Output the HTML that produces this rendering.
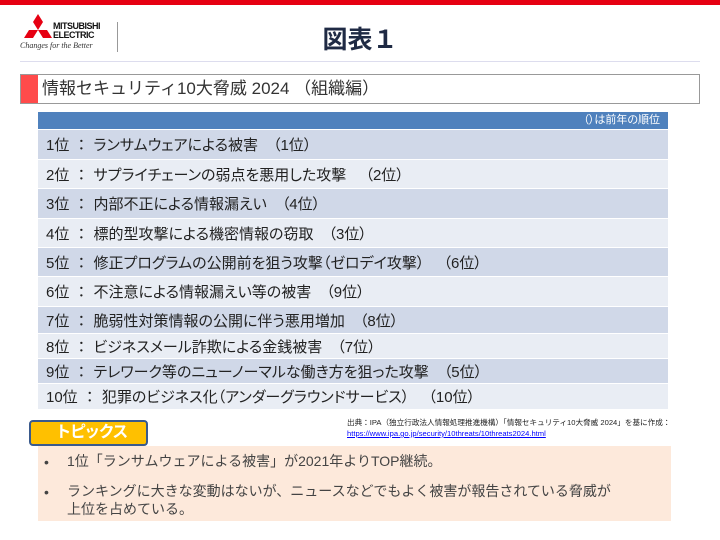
<!DOCTYPE html>
<html><head><meta charset="utf-8"><style>
*{margin:0;padding:0;box-sizing:border-box}
body{width:720px;height:540px;background:#fff;position:relative;overflow:hidden;font-family:"Liberation Sans","Noto Sans CJK JP",sans-serif;color:#222}
.abs{position:absolute}
.row{position:absolute;left:38px;width:630px;font-size:15px;color:#222;padding-left:8px;display:flex;align-items:center;white-space:pre;font-feature-settings:"palt"}
.d{background:#d0d8e8}.l{background:#e9edf4}
</style></head><body>
<div class="abs" style="left:0;top:0;width:720px;height:5px;background:#e60012"></div>
<svg class="abs" style="left:20px;top:14px" width="36" height="32" viewBox="0 0 36 32">
<polygon points="18,0 23,8 18,16 13,8" fill="#e60012"/>
<polygon points="18,16 9,16 4,24 13,24" fill="#e60012"/>
<polygon points="18,16 27,16 32,24 23,24" fill="#e60012"/>
</svg>
<div class="abs" style="left:53px;top:22px;font-size:9px;font-weight:bold;line-height:9px;letter-spacing:-0.5px;color:#111">MITSUBISHI<br>ELECTRIC</div>
<div class="abs" style="left:20px;top:41px;font-size:8px;font-style:italic;font-family:'Liberation Serif',serif;color:#333">Changes for the Better</div>
<div class="abs" style="left:117px;top:22px;width:1px;height:30px;background:#999"></div>
<div class="abs" style="left:0;top:26px;width:720px;text-align:center;font-size:25px;font-weight:bold;color:#1f2a44;line-height:28px">図表１</div>
<div class="abs" style="left:20px;top:61px;width:680px;height:1px;background:#dde"></div>
<div class="abs" style="left:20px;top:74px;width:680px;height:30px;border:1px solid #999"></div>
<div class="abs" style="left:21px;top:75px;width:17px;height:28px;background:#ff4b4b"></div>
<div class="abs" style="left:42px;top:77px;font-size:17px;color:#333;line-height:24px">情報セキュリティ10大脅威 2024 （組織編）</div>
<div class="abs" style="left:38px;top:112px;width:630px;height:17px;background:#4f81bd;color:#fff;font-size:11px;text-align:right;padding-right:8px;line-height:17px;font-feature-settings:'palt'">（）は前年の順位</div>
<div class="row d" style="top:130px;height:29px">1位  ：  ランサムウェアによる被害　（1位）</div>
<div class="row l" style="top:160px;height:28px">2位  ：  サプライチェーンの弱点を悪用した攻撃　 （2位）</div>
<div class="row d" style="top:189px;height:29px">3位  ：  内部不正による情報漏えい　（4位）</div>
<div class="row l" style="top:219px;height:28px">4位  ：  標的型攻撃による機密情報の窃取　（3位）</div>
<div class="row d" style="top:248px;height:28px">5位  ：  修正プログラムの公開前を狙う攻撃（ゼロデイ攻撃）　 （6位）</div>
<div class="row l" style="top:277px;height:29px">6位  ：  不注意による情報漏えい等の被害　（9位）</div>
<div class="row d" style="top:307px;height:26px">7位  ：  脆弱性対策情報の公開に伴う悪用増加　（8位）</div>
<div class="row l" style="top:334px;height:24px">8位  ：  ビジネスメール詐欺による金銭被害　（7位）</div>
<div class="row d" style="top:359px;height:24px">9位  ：  テレワーク等のニューノーマルな働き方を狙った攻撃　（5位）</div>
<div class="row l" style="top:384px;height:25px">10位  ：  犯罪のビジネス化（アンダーグラウンドサービス）　 （10位）</div>
<div class="abs" style="left:347px;top:417px;font-size:7.6px;color:#222;line-height:11px;white-space:nowrap">出典：IPA（独立行政法人情報処理推進機構）「情報セキュリティ10大脅威 2024」を基に作成：<br><span style="color:#00f;text-decoration:underline">https://www.ipa.go.jp/security/10threats/10threats2024.html</span></div>
<div class="abs" style="left:38px;top:446px;width:633px;height:75px;background:#fde9db"></div>
<div class="abs" style="left:29px;top:420px;width:119px;height:26px;background:#ffc000;border:2px solid #3a5a8c;border-radius:4px;color:#fff;font-size:16px;font-weight:bold;padding-left:26px;line-height:21px;font-feature-settings:'palt'">トピックス</div>
<div class="abs" style="left:44px;top:453px;font-size:14px;color:#444;line-height:18px">•</div>
<div class="abs" style="left:67px;top:452px;font-size:14px;color:#444;line-height:18px;white-space:nowrap">1位「ランサムウェアによる被害」が2021年よりTOP継続。</div>
<div class="abs" style="left:44px;top:483px;font-size:14px;color:#444;line-height:18px">•</div>
<div class="abs" style="left:67px;top:482px;font-size:14px;color:#444;line-height:18px;white-space:nowrap">ランキングに大きな変動はないが、ニュースなどでもよく被害が報告されている脅威が<br>上位を占めている。</div>
</body></html>
